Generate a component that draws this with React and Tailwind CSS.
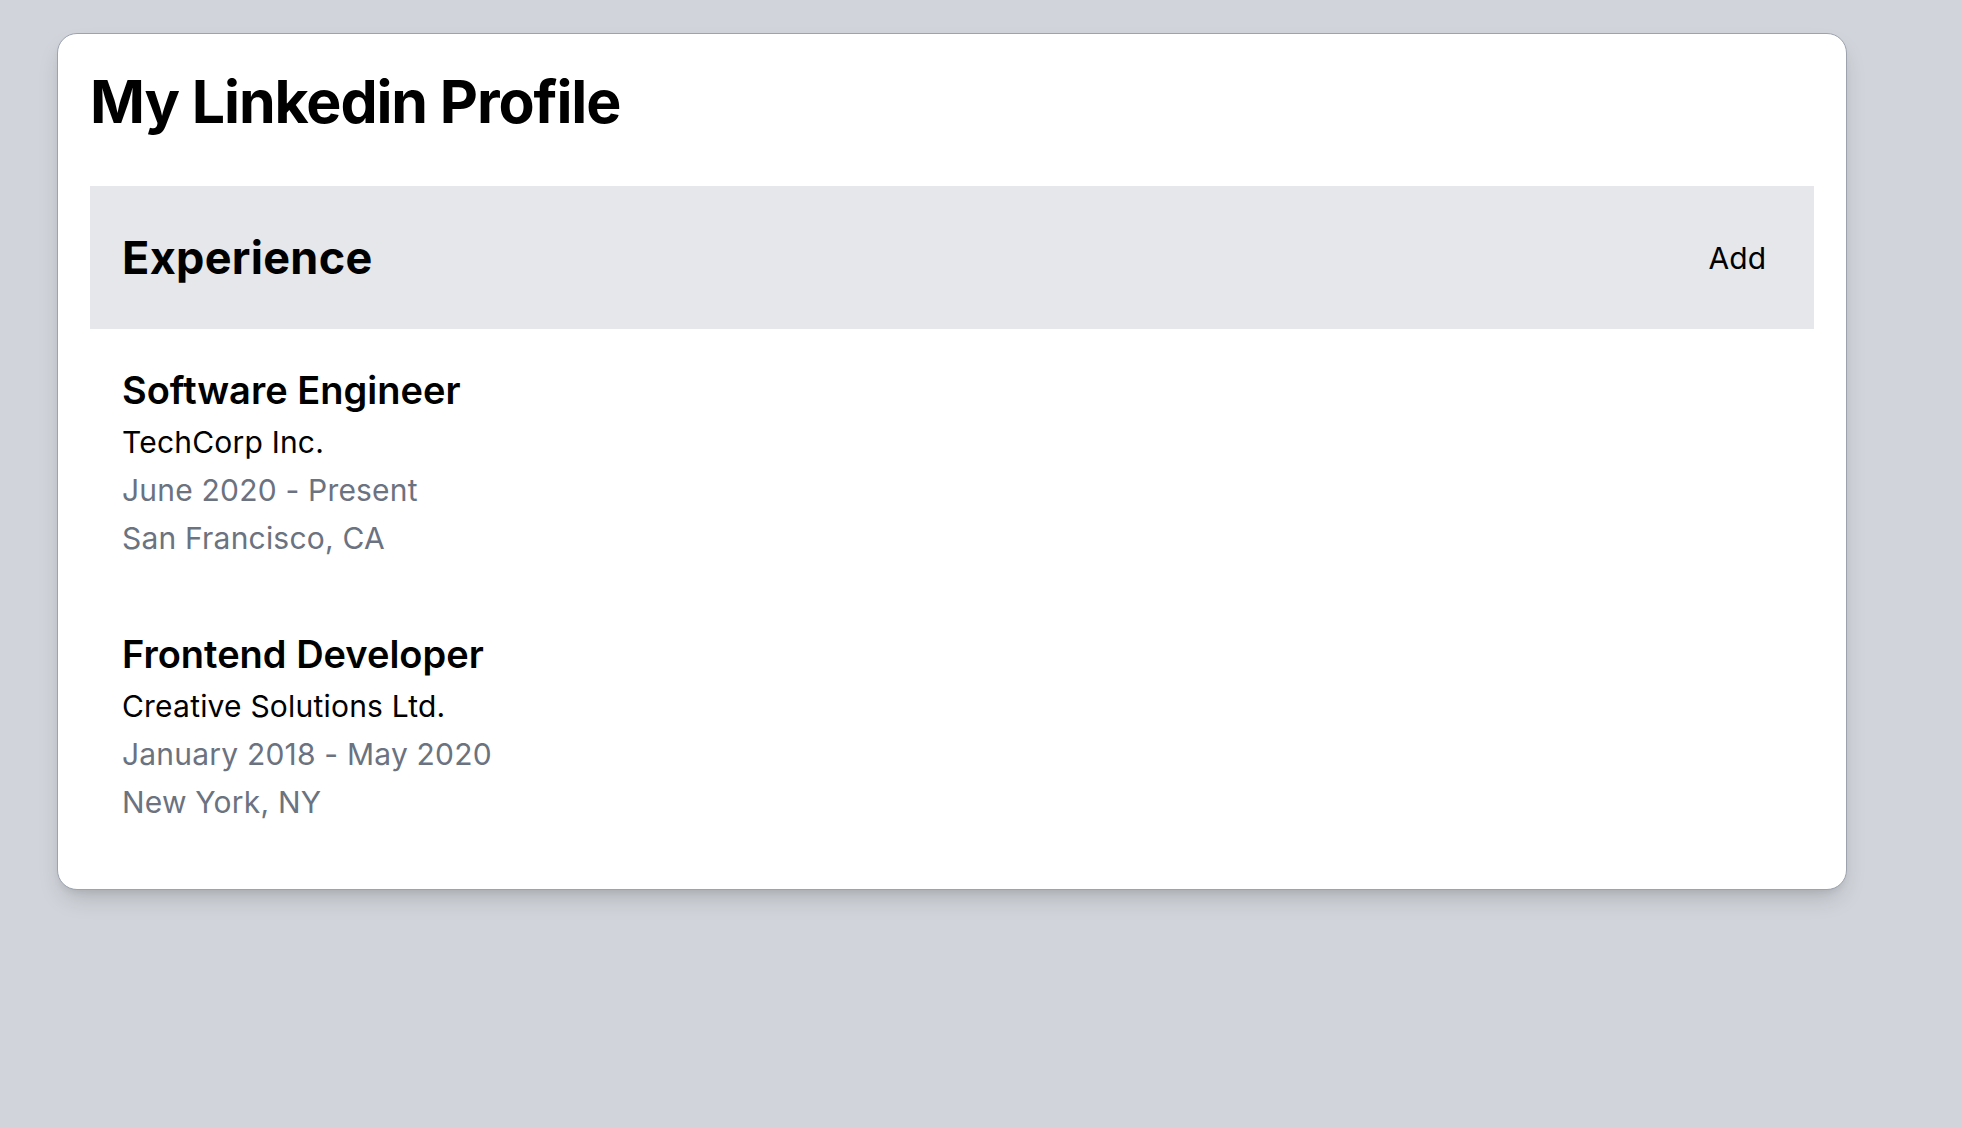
import React from "react";

const items = [
  {
    title: "Software Engineer",
    company: "TechCorp Inc.",
    dates: "June 2020 - Present",
    location: "San Francisco, CA",
  },
  {
    title: "Frontend Developer",
    company: "Creative Solutions Ltd.",
    dates: "January 2018 - May 2020",
    location: "New York, NY",
  },
];

export default function App() {
  return (
    <div
      className="min-h-screen bg-[#d1d5db] pl-[57px] pt-[33px]"
      style={{ fontFamily: "Inter, 'Noto Sans', sans-serif" }}
    >
      <div className="w-[1790px] rounded-[20px] border border-[#9ca3af] bg-white px-[32px] pt-[38px] pb-[28px] shadow-[0_12px_24px_-6px_rgba(0,0,0,0.18),0_4px_8px_-4px_rgba(0,0,0,0.1)]">
        <h1 className="mb-[54px] text-[59px] font-bold leading-[60px] tracking-[-1.1px] text-black">
          My Linkedin Profile
        </h1>
        <div className="flex h-[143px] items-center justify-between bg-[#e5e7eb] px-[31px]">
          <h2 className="ml-[1px] text-[45px] font-bold leading-[50px] tracking-[0.3px] text-black">
            Experience
          </h2>
          <button className="mr-[17px] text-[30px] leading-[40px] text-black">
            Add
          </button>
        </div>
        <div className="pt-[4px]">
          {items.map((it) => (
            <div key={it.title} className="px-[32px] py-[35px]">
              <h3 className="mb-[6px] text-[38px] font-semibold leading-[44px] text-black">
                {it.title}
              </h3>
              <p className="text-[30px] leading-[48px] tracking-[0.2px] text-black">
                {it.company}
              </p>
              <p className="text-[30px] leading-[48px] tracking-[0.2px] text-[#6b7280]">
                {it.dates}
              </p>
              <p className="text-[30px] leading-[48px] tracking-[0.2px] text-[#6b7280]">
                {it.location}
              </p>
            </div>
          ))}
        </div>
      </div>
    </div>
  );
}
